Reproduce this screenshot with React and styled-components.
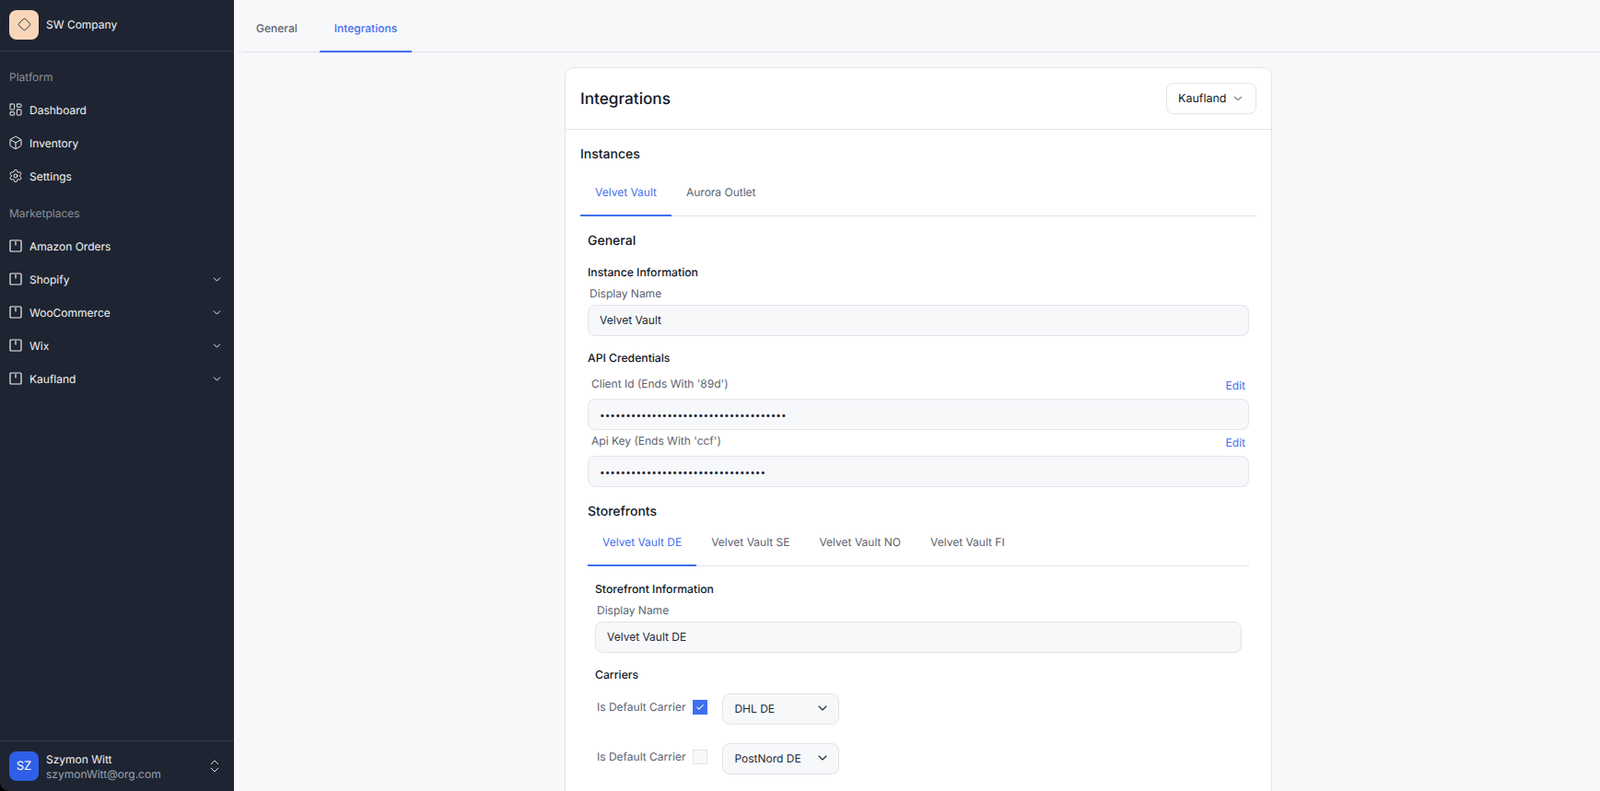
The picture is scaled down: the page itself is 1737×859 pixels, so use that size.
import React from "react";
import styled, { createGlobalStyle } from "styled-components";
import {
  Box,
  Check,
  ChevronDown,
  ChevronsUpDown,
  Diamond,
  LayoutDashboard,
  Settings,
} from "lucide-react";

const GlobalStyle = createGlobalStyle`
  html, body, #root {
    margin: 0;
    height: 100%;
  }
  body {
    overflow: hidden;
    background: #000;
    font-family: Inter, "Liberation Sans", sans-serif;
    font-size: 12px;
    color: #111827;
    text-rendering: geometricPrecision;
  }
  * {
    box-sizing: border-box;
  }
`;

function MarketIcon() {
  return (
    <svg width="16" height="16" viewBox="0 0 16 16" fill="none" stroke="currentColor" strokeWidth="1.2">
      <rect x="2" y="2" width="12" height="12" rx="1" />
      <path d="M8 3.5v3.5" strokeLinecap="round" />
    </svg>
  );
}

const platformItems = [
  { label: "Dashboard", icon: <LayoutDashboard size={16} strokeWidth={1.5} /> },
  { label: "Inventory", icon: <Box size={16} strokeWidth={1.5} /> },
  { label: "Settings", icon: <Settings size={16} strokeWidth={1.5} /> },
];

const marketItems = [
  { label: "Amazon Orders" },
  { label: "Shopify", expandable: true },
  { label: "WooCommerce", expandable: true },
  { label: "Wix", expandable: true },
  { label: "Kaufland", expandable: true },
];

function NavRow({ icon, label, expandable }) {
  return (
    <NavItem>
      {icon}
      <NavLabel>{label}</NavLabel>
      {expandable && <ChevronDown size={13} strokeWidth={1.8} />}
    </NavItem>
  );
}

function TabRow({ items, active }) {
  return (
    <TabList>
      {items.map((item) => (
        <Tab key={item} $active={item === active}>
          {item}
        </Tab>
      ))}
    </TabList>
  );
}

function CarrierRow({ carrier, checked }) {
  return (
    <CarrierLine>
      <CarrierCheck>
        <FieldLabel>Is Default Carrier</FieldLabel>
        <Checkbox $checked={checked}>{checked && <Check size={10} strokeWidth={2.5} />}</Checkbox>
      </CarrierCheck>
      <CarrierSelect>
        {carrier}
        <ChevronDown size={16} strokeWidth={1.6} />
      </CarrierSelect>
    </CarrierLine>
  );
}

export default function App() {
  return (
    <Page>
      <GlobalStyle />
      <Sidebar>
        <Brand>
          <BrandLogo>
            <Diamond size={15} strokeWidth={1.5} />
          </BrandLogo>
          <BrandName>SW Company</BrandName>
        </Brand>

        <NavGroup>
          <GroupLabel>Platform</GroupLabel>
          {platformItems.map((item) => (
            <NavRow key={item.label} {...item} />
          ))}
        </NavGroup>

        <NavGroup $tight>
          <GroupLabel>Marketplaces</GroupLabel>
          {marketItems.map((item) => (
            <NavRow key={item.label} icon={<MarketIcon />} {...item} />
          ))}
        </NavGroup>

        <UserBar>
          <Avatar>SZ</Avatar>
          <UserInfo>
            <UserName>Szymon Witt</UserName>
            <UserMail>szymonWitt@org.com</UserMail>
          </UserInfo>
          <ChevronsUpDown size={18} strokeWidth={1.2} />
        </UserBar>
      </Sidebar>

      <Main>
        <TopTabs>
          <TopTab>General</TopTab>
          <TopTab $active>Integrations</TopTab>
        </TopTabs>

        <Card>
          <CardHeader>
            <CardTitle>Integrations</CardTitle>
            <HeaderSelect>
              Kaufland
              <ChevronDown size={14} strokeWidth={1.5} />
            </HeaderSelect>
          </CardHeader>

          <CardBody>
            <SectionTitle>Instances</SectionTitle>
            <TabRow items={["Velvet Vault", "Aurora Outlet"]} active="Velvet Vault" />

            <Panel>
              <PanelTitle>General</PanelTitle>
              <GroupTitle>Instance Information</GroupTitle>
              <FieldLabelRow>
                <FieldLabel>Display Name</FieldLabel>
              </FieldLabelRow>
              <TextInput readOnly value="Velvet Vault" />

              <GroupTitle>API Credentials</GroupTitle>
              <SecretLabelRow>
                <FieldLabel>Client Id (Ends With '89d')</FieldLabel>
                <EditLink>Edit</EditLink>
              </SecretLabelRow>
              <SecretInput type="password" readOnly value={"x".repeat(36)} />
              <SecretLabelRow $close>
                <FieldLabel>Api Key (Ends With 'ccf')</FieldLabel>
                <EditLink>Edit</EditLink>
              </SecretLabelRow>
              <SecretInput type="password" readOnly value={"x".repeat(32)} />

              <StorefrontsTitle>Storefronts</StorefrontsTitle>
              <TabRow
                items={["Velvet Vault DE", "Velvet Vault SE", "Velvet Vault NO", "Velvet Vault FI"]}
                active="Velvet Vault DE"
              />

              <SubPanel>
                <GroupTitle>Storefront Information</GroupTitle>
                <FieldLabelRow>
                  <FieldLabel>Display Name</FieldLabel>
                </FieldLabelRow>
                <TextInput readOnly value="Velvet Vault DE" />

                <GroupTitle>Carriers</GroupTitle>
                <CarrierList>
                  <CarrierRow carrier="DHL DE" checked />
                  <CarrierRow carrier="PostNord DE" />
                </CarrierList>
              </SubPanel>
            </Panel>
          </CardBody>
        </Card>
      </Main>
    </Page>
  );
}

const Page = styled.div`
  display: flex;
  height: 100vh;
  overflow: hidden;
  background: #000;
`;

const Sidebar = styled.aside`
  flex: 0 0 254px;
  display: flex;
  flex-direction: column;
  background: #1e2431;
  border-bottom-left-radius: 10px;
  color: #f3f4f6;
`;

const Brand = styled.div`
  display: flex;
  align-items: center;
  gap: 8px;
  height: 56px;
  padding: 0 10px 2px;
  border-bottom: 1px solid #343a48;
`;

const BrandLogo = styled.div`
  display: flex;
  align-items: center;
  justify-content: center;
  width: 32px;
  height: 32px;
  border-radius: 8px;
  background: #f9d6b8;
  color: #1f2937;
`;

const BrandName = styled.span`
  font-size: 12px;
  font-weight: 400;
`;

const NavGroup = styled.nav`
  display: flex;
  flex-direction: column;
  padding-top: ${(p) => (p.$tight ? "13px" : "18px")};
`;

const GroupLabel = styled.div`
  height: 20px;
  margin-bottom: 7px;
  padding-left: 10px;
  font-size: 12px;
  line-height: 20px;
  color: #8c919c;
`;

const NavItem = styled.div`
  display: flex;
  align-items: center;
  gap: 7px;
  height: 36px;
  padding: 0 12px 0 9px;
  color: #f3f4f6;
  svg {
    flex-shrink: 0;
  }
`;

const NavLabel = styled.span`
  flex: 1;
  font-size: 12px;
  font-weight: 400;
`;

const UserBar = styled.div`
  display: flex;
  align-items: center;
  gap: 8px;
  height: 55px;
  margin-top: auto;
  padding: 0 12px 0 10px;
  border-top: 1px solid #343a48;
`;

const Avatar = styled.div`
  display: flex;
  align-items: center;
  justify-content: center;
  flex-shrink: 0;
  width: 32px;
  height: 32px;
  border-radius: 8px;
  background: #2f5fe6;
  color: #fff;
  font-size: 13px;
`;

const UserInfo = styled.div`
  flex: 1;
  display: flex;
  flex-direction: column;
  padding-top: 1px;
`;

const UserName = styled.span`
  font-size: 12px;
  font-weight: 400;
  line-height: 16px;
`;

const UserMail = styled.span`
  font-size: 12px;
  line-height: 16px;
  color: #9ca3af;
`;

const Main = styled.main`
  flex: 1;
  min-width: 0;
  padding-left: 3px;
  background: #f7f8fa;
`;

const TopTabs = styled.div`
  display: flex;
  gap: 8px;
  height: 57px;
  margin-left: 5px;
  border-bottom: 1px solid #e2e4ea;
`;

const TopTab = styled.div`
  display: flex;
  align-items: center;
  height: 57px;
  padding: 6px 16px 0;
  border-bottom: 2px solid ${(p) => (p.$active ? "#3f6ff0" : "transparent")};
  color: ${(p) => (p.$active ? "#3f6ff0" : "#5b6270")};
  font-size: 12px;
  font-weight: 500;
`;

const Card = styled.section`
  width: 768px;
  margin: 16px auto 0;
  padding-bottom: 200px;
  background: #fff;
  border: 1px solid #e2e4ea;
  border-radius: 10px;
`;

const CardHeader = styled.header`
  display: flex;
  align-items: center;
  justify-content: space-between;
  padding: 16px;
  border-bottom: 1px solid #e2e4ea;
`;

const CardTitle = styled.h1`
  margin: 0;
  font-size: 17.2px;
  font-weight: 500;
  color: #111827;
`;

const HeaderSelect = styled.div`
  display: flex;
  align-items: center;
  justify-content: space-between;
  width: 98px;
  height: 34px;
  padding: 0 12px;
  background: #fff;
  border: 1px solid #e2e4ea;
  border-radius: 8px;
  font-size: 12.5px;
`;

const CardBody = styled.div`
  padding: 19px 16px 0;
`;

const SectionTitle = styled.h2`
  margin: 0 0 5px;
  font-size: 14px;
  font-weight: 500;
  line-height: 16px;
`;

const TabList = styled.div`
  display: flex;
  border-bottom: 1px solid #e2e4ea;
`;

const Tab = styled.div`
  margin-bottom: -1px;
  padding: 18px 16px 14px;
  line-height: 20px;
  border-bottom: 2px solid ${(p) => (p.$active ? "#3f6ff0" : "transparent")};
  color: ${(p) => (p.$active ? "#3f6ff0" : "#5b6270")};
  font-size: 12px;
`;

const Panel = styled.div`
  padding: 0 8px;
`;

const PanelTitle = styled.h3`
  margin: 17px 0 0;
  font-size: 14px;
  font-weight: 500;
  line-height: 20px;
`;

const StorefrontsTitle = styled(PanelTitle)`
  margin: 17px 0 -5px;
`;

const GroupTitle = styled.h4`
  margin: 14px 0 0;
  font-size: 12.2px;
  font-weight: 500;
  line-height: 20px;
`;

const FieldLabelRow = styled.div`
  display: flex;
  margin-top: 3px;
  padding-left: 2px;
`;

const SecretLabelRow = styled.div`
  display: flex;
  align-items: flex-end;
  justify-content: space-between;
  height: 20px;
  margin: ${(p) => (p.$close ? "2px 0 6px" : "8px 0 6px")};
  padding: 0 4px;
`;

const FieldLabel = styled.label`
  font-size: 12px;
  line-height: 20px;
  color: #5b6270;
`;

const EditLink = styled.a`
  position: relative;
  top: 2px;
  font-size: 12px;
  line-height: 20px;
  color: #3f6ff0;
`;

const TextInput = styled.input`
  display: block;
  width: 100%;
  height: 34px;
  margin-top: 2px;
  padding: 0 12px 2px;
  background: #f7f8fa;
  border: 1px solid #e2e4ea;
  border-radius: 8px;
  outline: none;
  font-family: inherit;
  font-size: 12px;
  color: #1f2937;
`;

const SecretInput = styled(TextInput)`
  margin-top: 0;
  padding-bottom: 0;
  font-size: 10px;
`;

const SubPanel = styled.div`
  padding: 1px 8px 0;
`;

const CarrierList = styled.div`
  display: flex;
  flex-direction: column;
  gap: 20px;
  margin-top: 10px;
`;

const CarrierLine = styled.div`
  display: flex;
  align-items: flex-start;
  gap: 16px;
  padding-left: 2px;
`;

const CarrierCheck = styled.div`
  display: flex;
  align-items: center;
  gap: 8px;
  height: 30px;
`;

const Checkbox = styled.span`
  display: flex;
  align-items: center;
  justify-content: center;
  width: 16px;
  height: 16px;
  border: 1px solid ${(p) => (p.$checked ? "#3f6ff0" : "#e2e4ea")};
  background: ${(p) => (p.$checked ? "#3f6ff0" : "#f7f8fa")};
  color: #fff;
`;

const CarrierSelect = styled.div`
  display: flex;
  align-items: center;
  justify-content: space-between;
  width: 127px;
  height: 34px;
  padding: 0 9px 2px 12px;
  background: #f7f8fa;
  border: 1px solid #e2e4ea;
  border-radius: 8px;
  font-size: 12px;
  color: #1f2937;
`;
